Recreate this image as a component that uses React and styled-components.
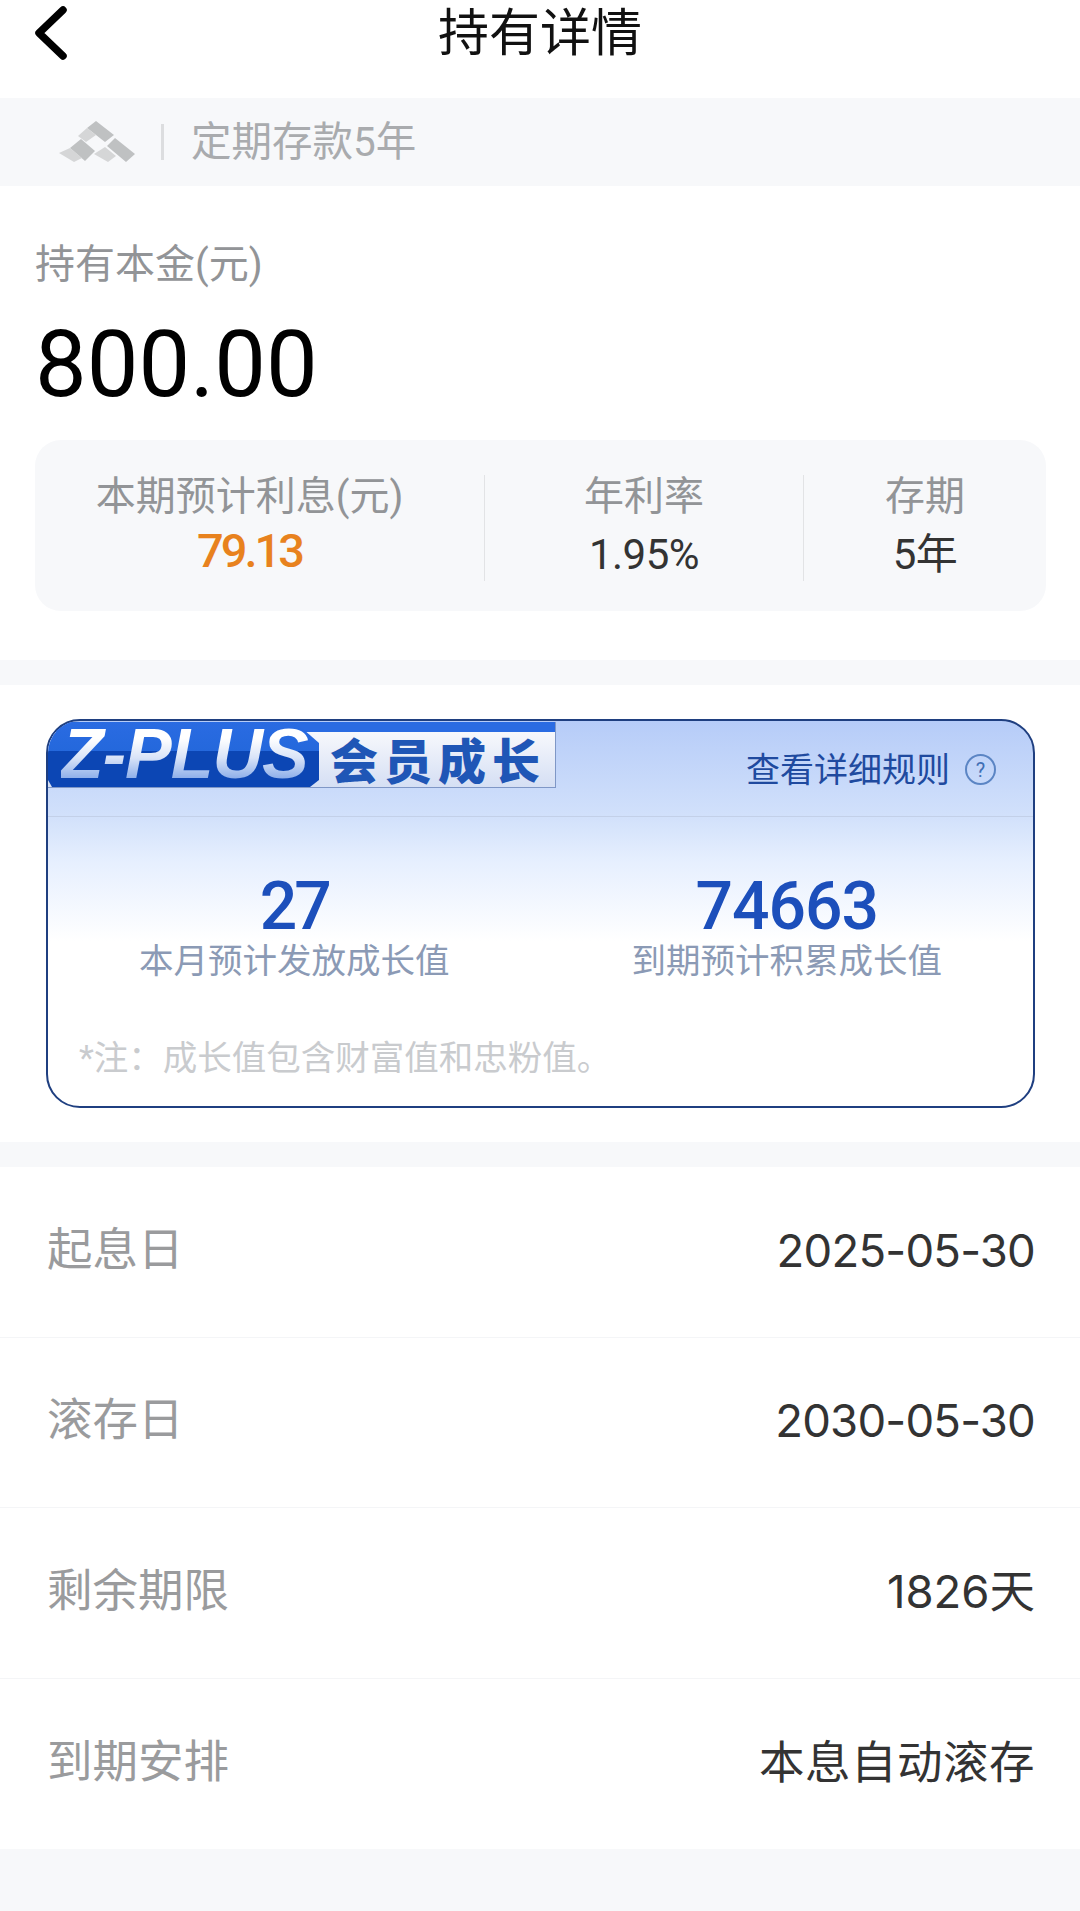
import React from "react";
import styled, { createGlobalStyle } from "styled-components";

const GlobalStyle = createGlobalStyle`
  html, body {
    margin: 0;
    padding: 0;
    background: #f7f8fa;
    font-family: Roboto, "Noto Sans CJK SC", sans-serif;
  }
  * {
    box-sizing: border-box;
  }
`;

const rows = [
  { label: "起息日", value: "2025-05-30", spacing: "-0.8px" },
  { label: "滚存日", value: "2030-05-30", spacing: "-0.8px" },
  { label: "剩余期限", value: "1826天", spacing: "0" },
  { label: "到期安排", value: "本息自动滚存", spacing: "0.5px" },
];

const BackIcon = () => (
  <svg width="36" height="54" viewBox="0 0 36 54">
    <path
      d="M30 4 L6 27 L30 50"
      fill="none"
      stroke="#000"
      strokeWidth="7.5"
      strokeLinecap="round"
      strokeLinejoin="round"
    />
  </svg>
);

const BankLogo = () => (
  <svg width="78" height="42" viewBox="0 0 78 42">
    <path d="M38 0 L56 14 L47 21 L29 7 Z" fill="#bfc1c2" />
    <path d="M29 7 L38 14 L28 21 L20 15 Z" fill="#d5d6d7" />
    <path d="M23 18 L37 30 L27 40 L12 27 Z" fill="#bfc1c2" />
    <path d="M12 27 L24 37 L16 41 L1 32 Z" fill="#d5d6d7" />
    <path d="M57 17 L77 33 L68 41 L49 25 Z" fill="#bfc1c2" />
    <path d="M47 26 L58 35 L50 41 L36 33 Z" fill="#d5d6d7" />
  </svg>
);

export default function App() {
  return (
    <Page>
      <GlobalStyle />
      <Header>
        <BackButton>
          <BackIcon />
        </BackButton>
        <Title>持有详情</Title>
      </Header>

      <ProductBar>
        <BankLogo />
        <ProductDivider />
        <ProductName>定期存款5年</ProductName>
      </ProductBar>

      <HoldingSection>
        <HoldingLabel>持有本金(元)</HoldingLabel>
        <Amount>800.00</Amount>
        <StatsBox>
          <StatCell $lead>
            <StatLabel>本期预计利息(元)</StatLabel>
            <Interest>79.13</Interest>
          </StatCell>
          <StatCell $divided>
            <StatLabel>年利率</StatLabel>
            <StatValue>1.95%</StatValue>
          </StatCell>
          <StatCell $divided>
            <StatLabel>存期</StatLabel>
            <StatValue>5年</StatValue>
          </StatCell>
        </StatsBox>
      </HoldingSection>

      <GrowthSection>
        <GrowthCard>
          <GrowthHead>
            <Badge>
              <BadgeBlue>
                <BadgeBrand>Z-PLUS</BadgeBrand>
              </BadgeBlue>
              <BadgeText>会员成长</BadgeText>
            </Badge>
            <RuleLink>
              查看详细规则
              <HelpMark>?</HelpMark>
            </RuleLink>
          </GrowthHead>
          <GrowthStats>
            <GrowthCell>
              <GrowthValue $tight>27</GrowthValue>
              <GrowthLabel>本月预计发放成长值</GrowthLabel>
            </GrowthCell>
            <GrowthCell>
              <GrowthValue>74663</GrowthValue>
              <GrowthLabel>到期预计积累成长值</GrowthLabel>
            </GrowthCell>
          </GrowthStats>
          <Note>*注：成长值包含财富值和忠粉值。</Note>
        </GrowthCard>
      </GrowthSection>

      <DetailList>
        {rows.map((row) => (
          <DetailRow key={row.label}>
            <DetailLabel>{row.label}</DetailLabel>
            <DetailValue $spacing={row.spacing}>{row.value}</DetailValue>
          </DetailRow>
        ))}
      </DetailList>
    </Page>
  );
}

const Page = styled.div`
  width: 1080px;
  min-height: 1911px;
  background: #f7f8fa;
`;

const Header = styled.header`
  height: 98px;
  background: #fff;
  display: flex;
  align-items: flex-start;
  justify-content: center;
  position: relative;
`;

const BackButton = styled.div`
  position: absolute;
  left: 33px;
  top: 6px;
  line-height: 0;
`;

const Title = styled.h1`
  margin: 0;
  font-size: 51px;
  font-weight: 400;
  line-height: 68px;
  color: #111;
`;

const ProductBar = styled.div`
  height: 88px;
  padding-left: 58px;
  display: flex;
  align-items: center;
  background: #f7f8fa;
`;

const ProductDivider = styled.div`
  width: 3px;
  height: 36px;
  margin: 0 27px 0 25px;
  background: #dcdddf;
`;

const ProductName = styled.div`
  font-size: 40.5px;
  color: #a9abae;
  line-height: 50px;
`;

const HoldingSection = styled.section`
  height: 474px;
  padding: 51px 34px 0 35px;
  background: #fff;
`;

const HoldingLabel = styled.div`
  font-size: 40px;
  line-height: 56px;
  color: #929497;
`;

const Amount = styled.div`
  margin-top: 20px;
  font-size: 92px;
  line-height: 104px;
  color: #000;
`;

const StatsBox = styled.div`
  margin-top: 23px;
  height: 171px;
  padding: 35px 0 34px;
  display: grid;
  grid-template-columns: 449px 319px 243px;
  background: #f7f8fa;
  border-radius: 26px;
`;

const StatCell = styled.div`
  display: flex;
  flex-direction: column;
  align-items: center;
  padding-right: ${(p) => (p.$lead ? "20px" : "0")};
  border-left: ${(p) => (p.$divided ? "1px solid #e2e3e5" : "none")};
`;

const StatLabel = styled.div`
  font-size: 40px;
  line-height: 46px;
  margin-top: -1px;
  color: #929497;
`;

const Interest = styled.div`
  margin-top: 5px;
  font-size: 47px;
  font-weight: 500;
  line-height: 52px;
  letter-spacing: -3px;
  color: #e8821e;
`;

const StatValue = styled.div`
  margin-top: 9px;
  font-size: 42px;
  line-height: 52px;
  letter-spacing: -0.5px;
  color: #333;
`;

const GrowthSection = styled.section`
  margin-top: 25px;
  height: 457px;
  padding: 34px 45px 0 46px;
  background: #fff;
`;

const GrowthCard = styled.div`
  height: 389px;
  border: 2px solid #1f3f80;
  border-radius: 34px;
  overflow: hidden;
  background: linear-gradient(
    180deg,
    #b6ccf8 0,
    #d2e1fb 97px,
    #e6effe 140px,
    #ffffff 220px
  );
`;

const GrowthHead = styled.div`
  height: 96px;
  padding: 1px 38px 0 0;
  display: flex;
  justify-content: space-between;
  border-bottom: 1px solid #c3d0e8;
`;

const Badge = styled.div`
  width: 508px;
  height: 66px;
  display: flex;
  background: linear-gradient(180deg, #2a6be2 0, #2a6be2 10px, #f7f8fc 10px, #d5dff4 100%);
  border-right: 1px solid #7f97c6;
  border-bottom: 1px solid #7f97c6;
`;

const BadgeBlue = styled.div`
  width: 271px;
  height: 65px;
  padding-left: 13px;
  flex-shrink: 0;
  clip-path: polygon(0 0, 247px 0, 271px 21px, 271px 58px, 262px 65px, 4px 65px, 0 58px);
  background: linear-gradient(180deg, #2a6be2 0, #2468dc 45%, #0c46b4 45%, #0c46b4 100%);
`;

const BadgeBrand = styled.div`
  font-family: "Liberation Sans", Arial, sans-serif;
  font-size: 70px;
  font-weight: 700;
  font-style: italic;
  line-height: 65px;
  letter-spacing: -1px;
  color: transparent;
  background: linear-gradient(180deg, #ffffff 25%, #d9e4f8 55%, #6f99e4 100%);
  -webkit-background-clip: text;
  background-clip: text;
`;

const BadgeText = styled.div`
  padding: 15px 0 0 11px;
  font-size: 48px;
  font-weight: 900;
  line-height: 52px;
  letter-spacing: 6px;
  white-space: nowrap;
  color: #1f56b6;
`;

const RuleLink = styled.div`
  margin-top: 24px;
  display: flex;
  align-items: flex-start;
  font-size: 34px;
  line-height: 48px;
  color: #1f4a9f;
`;

const HelpMark = styled.span`
  width: 31px;
  height: 31px;
  margin: 8px -1px 0 15px;
  display: flex;
  align-items: center;
  justify-content: center;
  border: 2px solid #5b85c4;
  border-radius: 50%;
  font-size: 20px;
  line-height: 1;
  color: #3f6fb5;
`;

const GrowthStats = styled.div`
  padding-top: 53px;
  display: grid;
  grid-template-columns: 1fr 1fr;
`;

const GrowthCell = styled.div`
  display: flex;
  flex-direction: column;
  align-items: center;
`;

const GrowthValue = styled.div`
  font-size: 66px;
  font-weight: 500;
  line-height: 74px;
  letter-spacing: ${(p) => (p.$tight ? "-3px" : "-1px")};
  color: #1c4fbb;
`;

const GrowthLabel = styled.div`
  margin-top: -5px;
  font-size: 34.5px;
  line-height: 44px;
  color: #8b9ab5;
`;

const Note = styled.div`
  margin: 51px 0 0 31px;
  font-size: 34.5px;
  line-height: 48px;
  color: #c9cbce;
`;

const DetailList = styled.section`
  margin-top: 25px;
  background: #fff;
`;

const DetailRow = styled.div`
  height: 170.5px;
  padding: 0 45px 2px 47px;
  display: flex;
  align-items: center;
  justify-content: space-between;
  border-bottom: 1px solid #f4f5f7;

  &:last-child {
    border-bottom: none;
  }
`;

const DetailLabel = styled.div`
  font-size: 45.5px;
  line-height: 60px;
  color: #9a9b9d;
`;

const DetailValue = styled.div`
  font-family: Inter, "Noto Sans CJK SC", sans-serif;
  font-size: 45.5px;
  line-height: 60px;
  letter-spacing: ${(p) => p.$spacing};
  color: #333;
`;
